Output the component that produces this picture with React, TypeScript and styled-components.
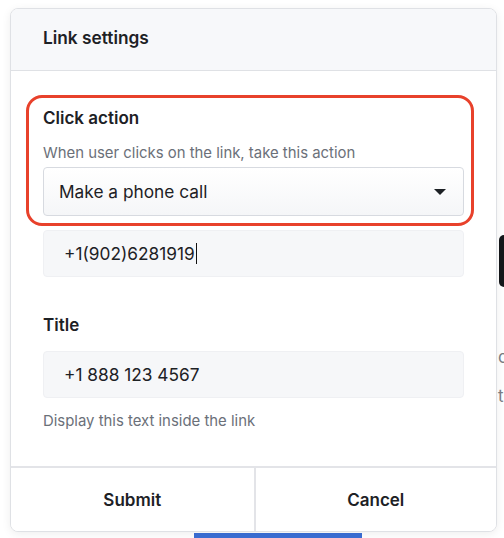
import * as React from 'react';
import styled, {createGlobalStyle} from 'styled-components';

const GlobalStyle = createGlobalStyle`
  html, body {
    margin: 0;
    padding: 0;
    background: #ffffff;
  }
  body {
    font-family: Inter, Roboto, "Liberation Sans", Arial, sans-serif;
    color: #1f2328;
    -webkit-font-smoothing: antialiased;
  }
`;

const Stage = styled.div`
  position: relative;
  width: 504px;
  height: 538px;
  overflow: hidden;
  padding: 8px 0 0 10px;
  box-sizing: border-box;
`;

// page content that sits behind the popover
const Backdrop = styled.div`
  position: absolute;
  inset: 0;
  z-index: 0;
`;

const DarkButton = styled.div`
  position: absolute;
  left: 499px;
  top: 235px;
  width: 14px;
  height: 52px;
  border-radius: 5px;
  background: #14171a;
`;

const GhostLetter = styled.span<{$top: number}>`
  position: absolute;
  left: 498px;
  top: ${(p) => p.$top}px;
  font-size: 17px;
  color: #7b7f85;
`;

const BlueBar = styled.div`
  position: absolute;
  left: 194px;
  top: 533px;
  width: 168px;
  height: 6px;
  background: #3b6fd6;
`;

const Panel = styled.div`
  position: relative;
  z-index: 1;
  width: 487px;
  height: 524px;
  box-sizing: border-box;
  display: flex;
  flex-direction: column;
  background: #ffffff;
  border: 1px solid #dfe1e5;
  border-radius: 8px;
  box-shadow: 0 2px 10px rgba(0, 0, 0, 0.07);
  overflow: hidden;
`;

const Header = styled.div`
  height: 62px;
  box-sizing: border-box;
  display: flex;
  align-items: center;
  padding: 0 32px 4px;
  background: #f7f8fa;
  border-bottom: 1px solid #dfe1e5;
  font-size: 17.3px;
  font-weight: 600;
  color: #1d2125;
  flex-shrink: 0;
`;

const Body = styled.div`
  flex: 1;
  display: flex;
  flex-direction: column;
  padding: 37px 32px 0;
`;

const Group = styled.div`
  position: relative;
  display: flex;
  flex-direction: column;
`;

const Highlight = styled.div`
  position: absolute;
  left: -17px;
  right: -10px;
  top: -13px;
  bottom: -10px;
  border: 3px solid #e8412b;
  border-radius: 16px;
  pointer-events: none;
`;

const Label = styled.div<{$mt?: number}>`
  font-size: 17px;
  line-height: 20px;
  font-weight: 600;
  color: #1d2125;
  margin-top: ${(p) => p.$mt || 0}px;
`;

const Hint = styled.div<{$mt?: number}>`
  font-size: 14.9px;
  line-height: 20px;
  color: #6b7079;
  margin-top: ${(p) => p.$mt || 0}px;
`;

const Select = styled.div`
  margin-top: 4px;
  height: 49px;
  box-sizing: border-box;
  display: flex;
  align-items: center;
  justify-content: space-between;
  padding: 0 17px 0 15px;
  border: 1px solid #d7dae0;
  border-radius: 4px;
  background: linear-gradient(#ffffff, #f5f6f8);
  font-size: 17.3px;
  color: #1d2125;
`;

const Caret = styled.span`
  width: 0;
  height: 0;
  border-left: 6px solid transparent;
  border-right: 6px solid transparent;
  border-top: 6px solid #1d2125;
`;

const Field = styled.div<{$mt: number}>`
  margin-top: ${(p) => p.$mt}px;
  height: 47px;
  box-sizing: border-box;
  display: flex;
  align-items: center;
  padding: 0 20px;
  border: 1px solid #eff0f3;
  border-radius: 4px;
  background: #f6f7f9;
  font-size: 17.3px;
  color: #1d2125;
`;

const TextCursor = styled.span`
  display: inline-block;
  width: 1.5px;
  height: 21px;
  margin-left: 1px;
  background: #111;
`;

const Footer = styled.div`
  height: 63px;
  flex-shrink: 0;
  display: grid;
  grid-template-columns: 1fr 1fr;
  border-top: 2px solid #e3e4e8;
`;

const FooterButton = styled.button`
  appearance: none;
  border: none;
  background: #ffffff;
  font-family: inherit;
  font-size: 17px;
  font-weight: 600;
  color: #1d2125;
  cursor: pointer;

  & + & {
    border-left: 2px solid #e3e4e8;
  }
`;

const App: React.FunctionComponent = () => {
  return (
    <>
      <GlobalStyle />
      <Stage>
        <Backdrop>
          <DarkButton />
          <GhostLetter $top={347}>c</GhostLetter>
          <GhostLetter $top={386}>t</GhostLetter>
          <BlueBar />
        </Backdrop>
        <Panel>
          <Header>Link settings</Header>
          <Body>
            <Group>
              <Highlight />
              <Label>Click action</Label>
              <Hint $mt={15}>When user clicks on the link, take this action</Hint>
              <Select>
                Make a phone call
                <Caret />
              </Select>
            </Group>
            <Field $mt={14}>
              +1(902)6281919
              <TextCursor />
            </Field>
            <Label $mt={38}>Title</Label>
            <Field $mt={16}>+1 888 123 4567</Field>
            <Hint $mt={13}>Display this text inside the link</Hint>
          </Body>
          <Footer>
            <FooterButton>Submit</FooterButton>
            <FooterButton>Cancel</FooterButton>
          </Footer>
        </Panel>
      </Stage>
    </>
  );
};

export default App;
